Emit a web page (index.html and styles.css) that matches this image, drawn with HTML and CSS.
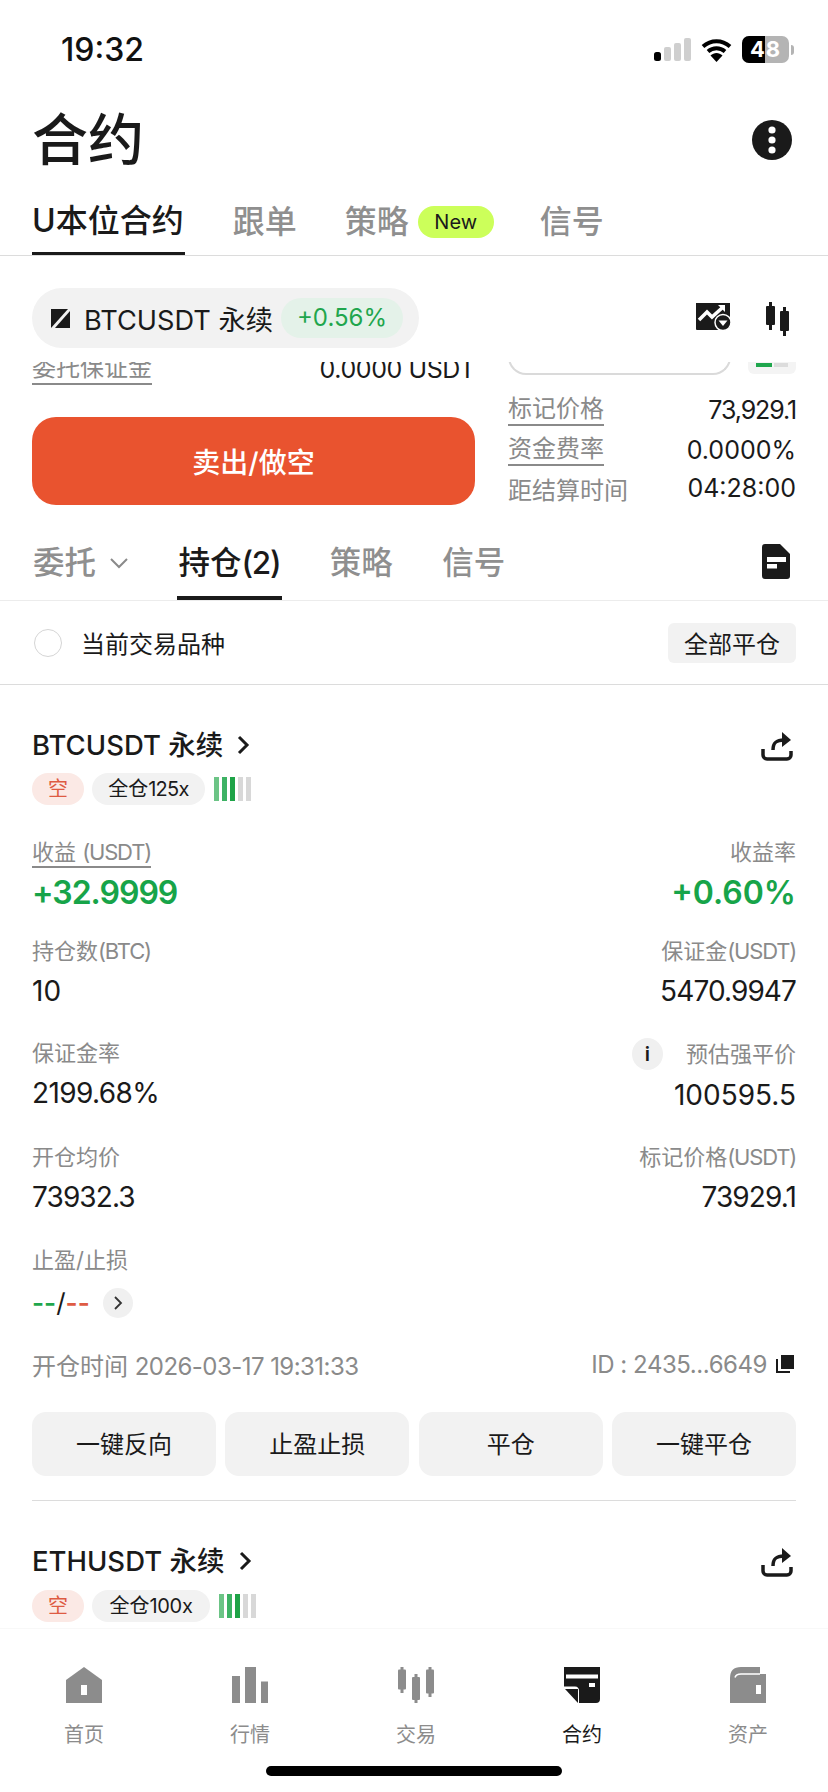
FILE: index.html
```html
<!DOCTYPE html>
<html lang="zh-CN">
<head>
<meta charset="utf-8">
<title>合约</title>
<link rel="stylesheet" href="styles.css">
</head>
<body>
<div class="app">
  <div class="status">
    <span class="time">19:32</span>
    <div class="status-icons">
      <svg class="signal" width="37" height="23" viewBox="0 0 37 23"><rect x="0" y="14" width="7" height="9" rx="2.5" fill="#000"/><rect x="10" y="9" width="7" height="14" rx="2" fill="#cfcfcf"/><rect x="20" y="5" width="7" height="18" rx="2" fill="#cfcfcf"/><rect x="30" y="0" width="7" height="23" rx="2" fill="#cfcfcf"/></svg>
      <svg class="wifi" width="31" height="24" viewBox="0 0 31 24"><path d="M2 8.5C10 1.5 21 1.5 29 8.5M7 13.5C12 9.3 19 9.3 24 13.5" fill="none" stroke="#000" stroke-width="4"/><path d="M9.5 17.5C13 14 18 14 21.5 17.5L15.500 24Z" fill="#000"/></svg>
      <div class="battery"><div class="battery-cell"><span class="battery-fill"></span><span class="battery-text">48</span></div><span class="battery-tip"></span></div>
    </div>
  </div>

  <header class="head">
    <h1 class="title">合约</h1>
    <svg width="40" height="40" viewBox="0 0 40 40"><circle cx="20" cy="20" r="20" fill="#1a1a1a"/><circle cx="20" cy="10" r="3.600" fill="#fff"/><circle cx="20" cy="20" r="3.600" fill="#fff"/><circle cx="20" cy="30" r="3.600" fill="#fff"/></svg>
  </header>

  <nav class="tabs">
    <span class="tab tab-active">U本位合约</span>
    <span class="tab">跟单</span>
    <span class="tab tab-strategy">策略<span class="new-badge">New</span></span>
    <span class="tab">信号</span>
  </nav>

  <div class="pair-row">
    <div class="pair-pill">
      <svg width="19" height="19" viewBox="0 0 19 19"><path d="M0 0H17L0 19Z" fill="#1a1a1a"/><path d="M19 2V19H4Z" fill="#1a1a1a"/></svg>
      <span class="pair-name">BTCUSDT 永续</span>
      <span class="pair-change">+0.56%</span>
    </div>
    <div class="pair-tools">
      <svg width="36" height="29" viewBox="0 0 36 29"><path d="M1 1H35V19H25V28H2A1 1 0 0 1 1 27Z" fill="#1a1a1a"/><rect x="21" y="16" width="14" height="10" fill="#1a1a1a"/><path d="M4 18L12 10L17 15L27 6" fill="none" stroke="#fff" stroke-width="3.500"/><path d="M23 3H30V10Z" fill="#fff"/><circle cx="28" cy="20.500" r="8" fill="#1a1a1a" stroke="#fff" stroke-width="1.500"/><path d="M23.500 18.500H32.500L28 24Z" fill="#fff"/></svg>
      <svg width="24" height="34" viewBox="0 0 24 34"><g fill="#1a1a1a"><rect x="3" y="0" width="3" height="28"/><rect x="0" y="4" width="9" height="19" rx="1"/><rect x="17" y="5" width="3" height="29"/><rect x="14" y="9" width="9" height="20" rx="1"/></g></svg>
    </div>
  </div>

  <main class="scroll">
    <section class="order-panel">
      <div class="order-left">
        <div class="margin-row">
          <span class="dotted">委托保证金</span>
          <span class="margin-value">0.0000 USDT</span>
        </div>
        <button class="sell-btn">卖出/做空</button>
      </div>
      <div class="order-right">
        <div class="input-row">
          <div class="input-end"></div>
          <div class="mini-pill"><span class="mini-on"></span><span class="mini-off"></span></div>
        </div>
        <div class="info-row"><span class="dotted">标记价格</span><span class="info-val tight">73,929.1</span></div>
        <div class="info-row"><span class="dotted">资金费率</span><span class="info-val">0.0000%</span></div>
        <div class="info-row info-last"><span>距结算时间</span><span class="info-val">04:28:00</span></div>
      </div>
    </section>

    <nav class="subtabs">
      <span class="subtab">委托<svg class="caret" width="20" height="12" viewBox="0 0 20 12"><path d="M2 2L10 10L18 2" fill="none" stroke="#8a8a8a" stroke-width="2"/></svg></span>
      <span class="subtab subtab-active">持仓<span class="paren">(2)</span></span>
      <span class="subtab">策略</span>
      <span class="subtab">信号</span>
      <svg class="doc-icon" width="28" height="35" viewBox="0 0 28 35"><path d="M3 0H18L28 10V32A3 3 0 0 1 25 35H3A3 3 0 0 1 0 32V3A3 3 0 0 1 3 0Z" fill="#1a1a1a"/><rect x="5" y="13" width="19" height="5" fill="#fff"/><rect x="5" y="20" width="10" height="4.500" fill="#fff"/></svg>
    </nav>

    <div class="filter">
      <label class="filter-check"><span class="radio"></span>当前交易品种</label>
      <button class="close-all">全部平仓</button>
    </div>

    <article class="position">
      <div class="pos-title">
        <span class="pos-name">BTCUSDT 永续</span>
        <svg class="pos-chevron" width="14" height="22" viewBox="0 0 14 22"><path d="M3 3L11 11L3 19" fill="none" stroke="#1a1a1a" stroke-width="3"/></svg>
        <svg class="share" width="32" height="30" viewBox="0 0 32 30"><path d="M12 19C12 11 16 9 23 9" fill="none" stroke="#1a1a1a" stroke-width="3.500"/><path d="M21 1L30 9L21 16Z" fill="#1a1a1a"/><path d="M2 18V24A4 4 0 0 0 6 28H26A4 4 0 0 0 30 24V20" fill="none" stroke="#1a1a1a" stroke-width="3.500"/></svg>
      </div>
      <div class="pos-tags">
        <span class="tag tag-short">空</span>
        <span class="tag tag-125">全仓<span class="lat">125x</span></span>
        <span class="lev"><i class="b1"></i><i class="b2"></i><i class="b3"></i><i class="b4"></i><i class="b5"></i></span>
      </div>
      <div class="metric-row metric-lead">
        <div><span class="label dotted">收益 <span class="lat">(USDT)</span></span><div class="val val-big tight">+32.9999</div></div>
        <div class="right"><span class="label label-rate">收益率</span><div class="val val-big">+0.60%</div></div>
      </div>
      <div class="metric-row">
        <div><span class="label">持仓数<span class="lat">(BTC)</span></span><div class="val">10</div></div>
        <div class="right"><span class="label">保证金<span class="lat">(USDT)</span></span><div class="val tight">5470.9947</div></div>
      </div>
      <div class="metric-row">
        <div><span class="label">保证金率</span><div class="val tight-soft">2199.68%</div></div>
        <div class="right"><span class="label label-info"><span class="info-dot">i</span>预估强平价</span><div class="val">100595.5</div></div>
      </div>
      <div class="metric-row">
        <div><span class="label">开仓均价</span><div class="val tight">73932.3</div></div>
        <div class="right"><span class="label">标记价格<span class="lat">(USDT)</span></span><div class="val tight">73929.1</div></div>
      </div>
      <div class="metric-row metric-tpsl">
        <div><span class="label">止盈/止损</span>
          <div class="val tpsl"><span class="tp">--</span>/<span class="sl">--</span>
            <span class="tpsl-btn"><svg width="10" height="16" viewBox="0 0 10 16"><path d="M2 2L8 8L2 14" fill="none" stroke="#333" stroke-width="1.800"/></svg></span>
          </div>
        </div>
      </div>
      <div class="pos-meta">
        <span>开仓时间 <span class="meta-num">2026-03-17 19:31:33</span></span>
        <span class="pos-id"><span class="meta-id">ID : 2435...6649</span><svg width="18" height="18" viewBox="0 0 18 18"><rect x="5" y="0" width="13" height="14" fill="#1a1a1a"/><path d="M1 4V17H14" fill="none" stroke="#1a1a1a" stroke-width="2"/></svg></span>
      </div>
      <div class="pos-actions">
        <button class="action">一键反向</button>
        <button class="action">止盈止损</button>
        <button class="action">平仓</button>
        <button class="action">一键平仓</button>
      </div>
      <div class="pos-divider"></div>
    </article>

    <article class="position">
      <div class="pos-title">
        <span class="pos-name">ETHUSDT 永续</span>
        <svg class="pos-chevron pos-chevron-eth" width="14" height="22" viewBox="0 0 14 22"><path d="M3 3L11 11L3 19" fill="none" stroke="#1a1a1a" stroke-width="3"/></svg>
        <svg class="share" width="32" height="30" viewBox="0 0 32 30"><path d="M12 19C12 11 16 9 23 9" fill="none" stroke="#1a1a1a" stroke-width="3.500"/><path d="M21 1L30 9L21 16Z" fill="#1a1a1a"/><path d="M2 18V24A4 4 0 0 0 6 28H26A4 4 0 0 0 30 24V20" fill="none" stroke="#1a1a1a" stroke-width="3.500"/></svg>
      </div>
      <div class="pos-tags">
        <span class="tag tag-short">空</span>
        <span class="tag tag-100">全仓<span class="lat-soft">100x</span></span>
        <span class="lev"><i class="b1"></i><i class="b2"></i><i class="b3"></i><i class="b4"></i><i class="b5"></i></span>
      </div>
    </article>
  </main>

  <footer class="nav">
    <div class="nav-items">
      <div class="nav-item">
        <svg width="36" height="36" viewBox="0 0 36 36"><path d="M0 13L18 0L36 13V36H0Z" fill="#8c8c8c"/><rect x="15" y="18" width="6" height="10" fill="#fff"/></svg>
        <span>首页</span>
      </div>
      <div class="nav-item">
        <svg width="36" height="36" viewBox="0 0 36 36"><g fill="#8c8c8c"><rect x="0" y="9" width="8" height="27"/><rect x="13" y="0" width="11" height="36"/><rect x="29" y="14.500" width="7" height="21.500"/></g></svg>
        <span>行情</span>
      </div>
      <div class="nav-item">
        <svg width="36" height="36" viewBox="0 0 36 36"><g fill="#8c8c8c"><rect x="2.500" y="0" width="3" height="26"/><rect x="0" y="2.500" width="8" height="20" rx="1"/><rect x="16.500" y="7" width="3" height="29"/><rect x="14" y="10" width="8" height="23" rx="1"/><rect x="30.500" y="0" width="3" height="30"/><rect x="28" y="2.500" width="8" height="24" rx="1"/></g></svg>
        <span>交易</span>
      </div>
      <div class="nav-item nav-active">
        <svg width="36" height="36" viewBox="0 0 36 36"><path d="M0 0H36V32A4 4 0 0 1 32 36H15V24Q15 19.500 11 19.500H0Z" fill="#1a1a1a"/><rect x="2" y="7.500" width="32" height="4" fill="#fff"/><rect x="25" y="16" width="6" height="4" fill="#fff"/><path d="M1 22H14V36Z" fill="#1a1a1a"/></svg>
        <span>合约</span>
      </div>
      <div class="nav-item">
        <svg width="36" height="36" viewBox="0 0 36 36"><path d="M0 36V11Q0 0 11 0H30V7H36V36Z" fill="#8c8c8c"/><path d="M5 10.500Q6 7 11 7H30" fill="none" stroke="#fff" stroke-width="1.500"/><rect x="26" y="18" width="5" height="9" fill="#fff"/></svg>
        <span>资产</span>
      </div>
    </div>
    <div class="home-bar"></div>
  </footer>
</div>
</body>
</html>
```

FILE: styles.css
```css
* { box-sizing: border-box; margin: 0; padding: 0; }
html, body { width: 828px; height: 1792px; background: #fff; }
body {
  font-family: "Inter", "Noto Sans CJK SC", sans-serif;
  color: #1a1a1a;
  overflow: hidden;
}
button { font-family: inherit; border: 0; cursor: pointer; }

.app { width: 828px; height: 1792px; display: flex; flex-direction: column; overflow: hidden; background: #fff; }

/* status bar */
.status { height: 94px; display: flex; justify-content: space-between; padding: 32px 34px 0 61px; flex: none; align-items: flex-start; }
.time { font-size: 32px; line-height: 36px; font-weight: 500; color: #111; }
.status-icons { display: flex; align-items: center; gap: 10px; padding: 4px 0 0; }
.battery { display: flex; align-items: center; gap: 2px; }
.battery-cell { position: relative; width: 47px; height: 27px; border-radius: 7px; background: #b4b4b4; overflow: hidden; display: flex; align-items: center; justify-content: center; }
.battery-fill { position: absolute; left: 0; top: 0; bottom: 0; width: 23px; background: #000; }
.battery-text { position: relative; color: #fff; font-size: 22px; font-weight: 700; letter-spacing: 1px; line-height: 27px; }
.battery-tip { width: 3px; height: 10px; background: #b4b4b4; border-radius: 0 3px 3px 0; }

/* header */
.head { height: 94px; display: flex; align-items: center; justify-content: space-between; padding: 0 36px 3px 32px; flex: none; }
.title { font-size: 56px; line-height: 64px; font-weight: 500; color: #1a1a1a; }

/* main tabs */
.tabs { height: 68px; display: flex; align-items: flex-start; padding: 0 0 0 32px; border-bottom: 1px solid #dcdcdc; flex: none; gap: 48px; }
.tab { display: flex; align-items: center; height: 67px; padding: 1px 0 0; font-size: 32px; font-weight: 500; color: #8f8f8f; line-height: 48px; }
.tab-active { color: #1a1a1a; border-bottom: 3px solid #1a1a1a; padding-right: 1px; }
.tab-strategy { gap: 9px; margin-right: -2px; }
.new-badge { width: 76px; height: 32px; border-radius: 16px; background: #ccff5a; color: #1a1a1a; font-size: 20px; line-height: 32px; font-weight: 400; text-align: center; }

/* pair row */
.pair-row { height: 106px; padding: 32px 38px 0 32px; display: flex; justify-content: space-between; align-items: flex-start; flex: none; }
.pair-pill { width: 387px; height: 60px; border-radius: 30px; background: #f2f2f2; display: flex; align-items: center; padding: 0 16px 0 19px; }
.pair-name { margin-left: 14px; font-size: 27.200px; font-weight: 400; color: #1a1a1a; white-space: nowrap; }
.pair-change { margin-left: auto; width: 122px; height: 40px; line-height: 40px; border-radius: 20px; background: #e4f2e9; color: #1fa64d; font-size: 24px; text-align: center; }
.pair-tools { display: flex; gap: 35px; padding-top: 14px; }

/* scroll area */
.scroll { flex: 1; min-height: 0; overflow: hidden; }

/* order panel */
.order-panel { margin-top: -14px; height: 162px; padding: 0 32px; display: flex; gap: 33px; }
.order-left { width: 443px; }
.margin-row { height: 41px; display: flex; justify-content: space-between; align-items: center; font-size: 24px; color: #8a8a8a; }
.margin-value { color: #1a1a1a; font-size: 25px; letter-spacing: -0.4px; }
.dotted { border-bottom: 2px solid #8a8a8a; line-height: 30px; display: inline-block; }
.sell-btn { display: block; width: 443px; height: 88px; margin-top: 28px; border-radius: 24px; background: #e9532f; color: #fff; font-size: 28px; font-weight: 500; }
.order-right { flex: 1; font-size: 24px; color: #8a8a8a; }
.input-row { height: 42px; display: flex; gap: 17px; align-items: flex-start; }
.input-end { width: 223px; height: 27px; border: 2px solid #dadada; border-top: 0; border-radius: 0 0 18px 18px; }
.mini-pill { width: 48px; height: 26px; background: #f4f4f4; border-radius: 0 0 6px 6px; display: flex; gap: 2px; align-items: flex-end; padding: 0 8px 7px; }
.mini-on { width: 16px; height: 4px; background: #1fa64d; }
.mini-off { width: 14px; height: 4px; background: #dcdcdc; }
.info-row { height: 40px; display: flex; justify-content: space-between; align-items: center; }
.info-last { margin-top: -2px; }
.info-val { color: #1a1a1a; font-size: 25px; }
.info-val.tight { letter-spacing: -1.1px; }

/* sub tabs */
.subtabs { height: 91px; display: flex; align-items: flex-end; gap: 45.500px; padding: 0 38px 0 31px; border-bottom: 1px solid #ececec; }
.subtab { display: flex; align-items: center; height: 59px; line-height: 44px; padding: 0 2px 11px; border-bottom: 4px solid transparent; font-size: 31.500px; font-weight: 500; color: #8f8f8f; }
.subtab-active { color: #1a1a1a; border-bottom-color: #1a1a1a; }
.paren { letter-spacing: -1.300px; }
.caret { margin-left: 13px; }
.doc-icon { margin-left: auto; align-self: flex-start; margin-top: 34px; }

/* filter */
.filter { height: 84px; padding: 0 32px; display: flex; justify-content: space-between; align-items: center; border-bottom: 1px solid #dcdcdc; }
.filter-check { display: flex; align-items: center; gap: 19px; font-size: 24px; color: #1a1a1a; padding-left: 2px; }
.radio { width: 28px; height: 28px; border-radius: 50%; border: 1.500px solid #d5d5d5; }
.close-all { width: 128px; height: 40px; border-radius: 6px; background: #f2f2f2; color: #1a1a1a; font-size: 24px; }

/* position */
.position { padding: 40px 32px 0; }
.pos-title { height: 40px; display: flex; align-items: center; }
.pos-name { font-size: 27.500px; line-height: 40px; font-weight: 500; color: #1a1a1a; white-space: nowrap; }
.pos-chevron { margin-left: 13px; }
.pos-chevron-eth { margin-left: 14px; }
.share { margin-left: auto; margin-right: 3px; margin-top: 2px; }
.pos-tags { display: flex; gap: 8px; align-items: center; margin-top: 8px; height: 32px; }
.position + .position .pos-tags { margin-top: 9px; }
.tag { height: 32px; line-height: 32px; border-radius: 16px; background: #f2f2f2; font-size: 20px; color: #1a1a1a; white-space: nowrap; text-align: center; }
.tag-short { width: 52px; background: #fbe9e5; color: #de5b43; }
.tag-125 { width: 113px; }
.tag-100 { width: 118px; }
.lat { letter-spacing: -1.2px; }
.tag .lat { letter-spacing: -0.7px; }
.lat-soft { letter-spacing: -0.3px; }
.lev { display: flex; gap: 3px; height: 24px; margin-left: 1px; }
.lev i { width: 5px; height: 24px; display: block; background: #d8d8d8; }
.lev .b1 { background: #6cc486; }
.lev .b2 { background: #3db264; }
.lev .b3 { background: #1ea347; }

.metric-row { display: flex; justify-content: space-between; margin-top: 29px; }
.metric-lead { margin-top: 33px; margin-bottom: -4px; }
.metric-tpsl { margin-top: 30px; }
.right { text-align: right; }
.label { display: inline-block; font-size: 22px; line-height: 30px; color: #8a8a8a; }
.label-rate { margin-top: -1px; margin-bottom: 1px; }
.label.dotted { border-bottom: 2px solid #8a8a8a; line-height: 28px; height: 30px; }
.label-info { display: inline-flex; align-items: center; gap: 23px; }
.info-dot { width: 31px; height: 32px; border-radius: 50%; background: #f0f0f0; color: #1a1a1a; font-size: 20px; font-weight: 600; line-height: 32px; text-align: center; }
.val { margin-top: 7px; font-size: 28px; line-height: 36px; color: #1a1a1a; white-space: nowrap; }
.val.tight { letter-spacing: -0.9px; }
.val.tight-soft { letter-spacing: -0.6px; }
.val-big { font-size: 32px; font-weight: 600; color: #17a449; }
.val-big.tight { letter-spacing: -1px; }
.tpsl { display: flex; align-items: center; gap: 0; margin-top: 10px; font-size: 26px; }
.tp { color: #1fa64d; font-weight: 600; }
.sl { color: #de5b43; font-weight: 600; }
.tpsl-btn { width: 30px; height: 30px; margin-left: 13px; border-radius: 50%; background: #f0f0f0; display: flex; align-items: center; justify-content: center; }
.pos-meta { margin-top: 28px; height: 30px; display: flex; justify-content: space-between; align-items: center; font-size: 24px; color: #8a8a8a; white-space: nowrap; }
.meta-num { letter-spacing: -0.55px; }
.meta-id { letter-spacing: -0.45px; }
.pos-id { display: flex; align-items: center; gap: 9px; padding-right: 2px; }
.pos-actions { margin-top: 33px; display: grid; grid-template-columns: repeat(4, 1fr); gap: 9.500px; }
.action { height: 64px; padding-bottom: 3px; border-radius: 14px; background: #f2f2f2; color: #1a1a1a; font-size: 24px; }
.pos-divider { margin-top: 24px; height: 1px; background: #dcdcdc; }

/* bottom nav */
.nav { height: 164px; flex: none; background: #fff; border-top: 1px solid #f8f8f8; overflow: hidden; }
.nav-items { display: grid; grid-template-columns: repeat(5, 166px); padding: 38px 0 0 1px; }
.nav-item { display: flex; flex-direction: column; align-items: center; font-size: 20px; line-height: 28px; color: #8c8c8c; }
.nav-item span { margin-top: 18px; }
.nav-active { color: #1a1a1a; }
.home-bar { width: 296px; height: 10px; border-radius: 5px; background: #000; margin: 17px auto 0; }
```
